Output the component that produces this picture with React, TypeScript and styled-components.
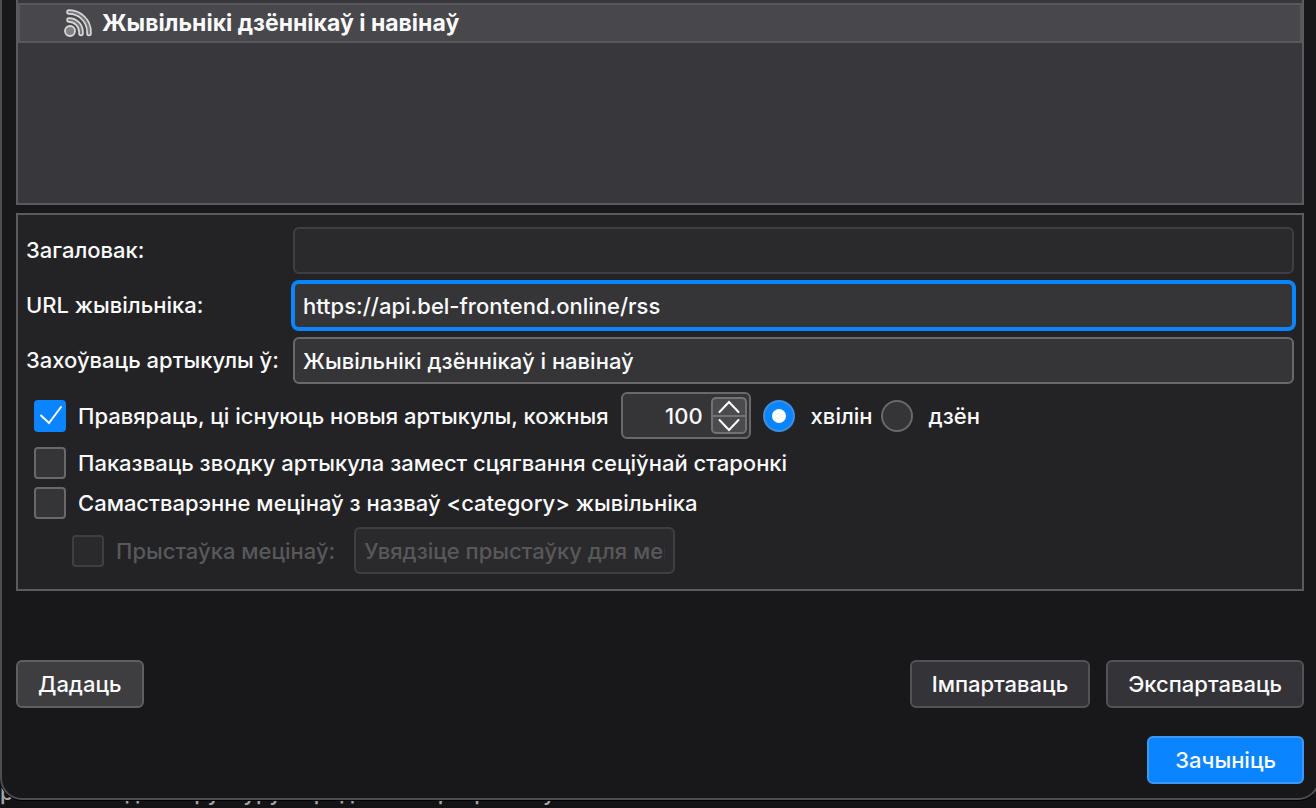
import React, { useState } from "react";
import styled, { createGlobalStyle } from "styled-components";

const GlobalStyle = createGlobalStyle`
  * { box-sizing: border-box; }
  html, body, #root { height: 100%; }
  body {
    margin: 0;
    background: #131315;
    color: #fbfbfe;
    font: 500 22px/28px Inter, "Open Sans", sans-serif;
    overflow: hidden;
  }
  button, input { font: inherit; color: inherit; margin: 0; }
`;

const Page = styled.div`
  display: flex;
  flex-direction: column;
  height: 100vh;
  overflow: hidden;
`;

const Dialog = styled.main`
  position: relative;
  z-index: 1;
  flex: none;
  display: flex;
  flex-direction: column;
  margin-right: -4px;
  padding: 0 14px 14px;
  background: #18181a;
  border: 2px solid #4d4d50;
  border-top: 0;
  border-radius: 0 0 22px 22px;
  box-shadow: 0 1px 0 #000;
`;

const FeedList = styled.ul`
  list-style: none;
  margin: 0 0 8px;
  padding: 3px 0 0;
  min-height: 205px;
  background: #38373b;
  border: 2px solid #5b5b5e;
  border-top: 0;
`;

const FeedItem = styled.li`
  display: flex;
  align-items: center;
  gap: 10px;
  height: 40px;
  padding: 0 44px;
  background: #48474b;
  border: 2px solid #58585b;
  font-size: 23px;
  font-weight: 700;
`;

const Settings = styled.form`
  display: flex;
  flex-direction: column;
  gap: 8px;
  padding: 12px 8px 15px;
  background: #232325;
  border: 2px solid #5b5b5e;
`;

const Field = styled.div`
  display: grid;
  grid-template-columns: 259px 1fr;
  column-gap: 8px;
  align-items: center;
  > label { padding-bottom: 2px; }
`;

const TextInput = styled.input<{ $width?: number }>`
  width: ${(p) => (p.$width ? `${p.$width}px` : "100%")};
  height: 47px;
  padding: 0 8px;
  background: #353537;
  border: 2px solid #69696b;
  border-radius: 6px;
  outline: none;
  &:focus {
    border-color: #0a84ff;
    box-shadow: 0 0 0 2px #0a84ff;
  }
  &:disabled {
    background: #2a2a2c;
    border-color: #3f3f41;
  }
  &::placeholder { color: #58585a; opacity: 1; }
`;

const Options = styled.div`
  display: flex;
  flex-direction: column;
  gap: 8px;
  padding-left: 8px;
`;

const OptionRow = styled.div<{ $indent?: boolean; $gap?: number }>`
  display: flex;
  align-items: center;
  gap: ${(p) => p.$gap ?? 8}px;
  padding-left: ${(p) => (p.$indent ? 38 : 0)}px;
`;

const ChoiceLabel = styled.label<{ $gap?: number; $disabled?: boolean }>`
  display: flex;
  align-items: center;
  gap: ${(p) => p.$gap ?? 12}px;
  color: ${(p) => (p.$disabled ? "#58585a" : "inherit")};
  white-space: nowrap;
`;

const BoxStack = styled.span`
  display: grid;
  flex: none;
  > * { grid-area: 1 / 1; }
  > svg { pointer-events: none; visibility: hidden; }
  > input:checked + svg { visibility: visible; }
`;

const ChoiceInput = styled.input`
  appearance: none;
  width: 32px;
  height: 32px;
  background: #353537;
  border: 2px solid #69696b;
  border-radius: ${(p) => (p.type === "radio" ? "50%" : "4px")};
  &:checked {
    background: #0a84ff;
    border-color: ${(p) => (p.type === "radio" ? "#3f8fe0" : "#0a84ff")};
  }
  &:disabled {
    background: #2a2a2c;
    border-color: #3f3f41;
  }
`;

const Spinner = styled.div`
  display: flex;
  align-items: center;
  width: 130px;
  height: 47px;
  padding: 0 2px;
  margin: 0 4px;
  background: #353537;
  border: 2px solid #69696b;
  border-radius: 6px;
`;

const NumberInput = styled.input`
  flex: 1;
  min-width: 0;
  padding: 0 8px 0 0;
  text-align: right;
  background: none;
  border: 0;
  outline: none;
  appearance: textfield;
  &::-webkit-inner-spin-button { appearance: none; margin: 0; }
`;

const Steps = styled.div`
  display: flex;
  flex-direction: column;
  width: 36px;
`;

const StepButton = styled.button<{ $up?: boolean }>`
  display: grid;
  place-items: center;
  height: ${(p) => (p.$up ? 18 : 19)}px;
  padding: 0;
  background: #4b4b4d;
  border: 2px solid #727274;
  border-bottom-width: ${(p) => (p.$up ? 0 : 2)}px;
  border-radius: ${(p) => (p.$up ? "5px 5px 0 0" : "0 0 5px 5px")};
`;

const Actions = styled.div<{ $top: number }>`
  display: flex;
  gap: 16px;
  margin-top: ${(p) => p.$top}px;
`;

const Spacer = styled.span`
  flex: 1;
`;

const Button = styled.button<{ $kind?: "focus" | "primary" }>`
  height: 48px;
  padding: 0 ${(p) => (p.$kind === "primary" ? 26 : 20)}px;
  background: ${(p) =>
    p.$kind === "primary" ? "#0a84ff" : p.$kind === "focus" ? "#3e3e41" : "#343338"};
  border: 2px solid ${(p) => (p.$kind === "primary" ? "#3b99f5" : p.$kind === "focus" ? "#5f5f61" : "#535357")};
  border-radius: 6px;
`;

const BackgroundText = styled.p`
  margin: -22px 0 0;
  display: flex;
  color: #a5a5a8;
  white-space: pre;
`;

const Word = styled.span<{ $before?: number }>`
  margin-left: ${(p) => p.$before ?? 0}px;
`;

const FeedIcon = () => (
  <svg width="28" height="28" viewBox="0 0 28 28" fill="none" strokeLinecap="round" aria-hidden="true">
    <g stroke="#d8d8da" strokeWidth="5.5">
      <path d="M5 3A20 20 0 0 1 25 23V24.500" />
      <path d="M5 11A12 12 0 0 1 17 23V24.500" />
    </g>
    <g stroke="#77777a" strokeWidth="2.2">
      <path d="M5 3A20 20 0 0 1 25 23V24.500" />
      <path d="M5 11A12 12 0 0 1 17 23V24.500" />
    </g>
    <circle cx="6" cy="22" r="5" fill="#828285" stroke="#d8d8da" strokeWidth="1.800" />
  </svg>
);

const CheckMark = () => (
  <svg width="32" height="32" viewBox="0 0 32 32" fill="none" stroke="#fff" strokeWidth="2" strokeLinecap="round" aria-hidden="true">
    <path d="M7 15.500l8 7.500L27 7" />
  </svg>
);

const RadioDot = () => (
  <svg width="32" height="32" viewBox="0 0 32 32" aria-hidden="true">
    <circle cx="16" cy="16" r="7" fill="#fff" />
  </svg>
);

const Chevron = ({ up }: { up?: boolean }) => (
  <svg width="22" height="14" viewBox="0 0 22 14" fill="none" stroke="#fff" strokeWidth="2" strokeLinecap="round" aria-hidden="true">
    <path d={up ? "M1.500 12L11 2l9.500 10" : "M1.500 2L11 12l9.500-10"} />
  </svg>
);

export default function App() {
  const [interval, setIntervalValue] = useState(100);
  const [unit, setUnit] = useState("minutes");

  return (
    <>
      <GlobalStyle />
      <Page>
        <Dialog>
          <FeedList>
            <FeedItem>
              <FeedIcon />
              Жывільнікі дзённікаў і навінаў
            </FeedItem>
          </FeedList>

          <Settings onSubmit={(e) => e.preventDefault()}>
            <Field>
              <label htmlFor="title">Загаловак:</label>
              <TextInput id="title" disabled />
            </Field>
            <Field>
              <label htmlFor="url">URL жывільніка:</label>
              <TextInput id="url" autoFocus defaultValue="https://api.bel-frontend.online/rss" />
            </Field>
            <Field>
              <label htmlFor="folder">Захоўваць артыкулы ў:</label>
              <TextInput id="folder" defaultValue="Жывільнікі дзённікаў і навінаў" />
            </Field>

            <Options>
              <OptionRow>
                <ChoiceLabel>
                  <BoxStack>
                    <ChoiceInput type="checkbox" defaultChecked />
                    <CheckMark />
                  </BoxStack>
                  Правяраць, ці існуюць новыя артыкулы, кожныя
                </ChoiceLabel>
                <Spinner>
                  <NumberInput
                    type="number"
                    aria-label="Інтэрвал"
                    value={interval}
                    onChange={(e) => setIntervalValue(Number(e.target.value))}
                  />
                  <Steps>
                    <StepButton type="button" $up aria-label="+" onClick={() => setIntervalValue(interval + 1)}>
                      <Chevron up />
                    </StepButton>
                    <StepButton type="button" aria-label="-" onClick={() => setIntervalValue(interval - 1)}>
                      <Chevron />
                    </StepButton>
                  </Steps>
                </Spinner>
                <ChoiceLabel $gap={16}>
                  <BoxStack>
                    <ChoiceInput type="radio" name="unit" checked={unit === "minutes"} onChange={() => setUnit("minutes")} />
                    <RadioDot />
                  </BoxStack>
                  хвілін
                </ChoiceLabel>
                <ChoiceLabel $gap={16}>
                  <BoxStack>
                    <ChoiceInput type="radio" name="unit" checked={unit === "days"} onChange={() => setUnit("days")} />
                    <RadioDot />
                  </BoxStack>
                  дзён
                </ChoiceLabel>
              </OptionRow>
              <OptionRow>
                <ChoiceLabel>
                  <BoxStack>
                    <ChoiceInput type="checkbox" />
                    <CheckMark />
                  </BoxStack>
                  Паказваць зводку артыкула замест сцягвання сеціўнай старонкі
                </ChoiceLabel>
              </OptionRow>
              <OptionRow>
                <ChoiceLabel>
                  <BoxStack>
                    <ChoiceInput type="checkbox" />
                    <CheckMark />
                  </BoxStack>
                  {"Самастварэнне мецінаў з назваў <category> жывільніка"}
                </ChoiceLabel>
              </OptionRow>
              <OptionRow $indent $gap={19}>
                <ChoiceLabel $disabled>
                  <BoxStack>
                    <ChoiceInput type="checkbox" disabled />
                    <CheckMark />
                  </BoxStack>
                  Прыстаўка мецінаў:
                </ChoiceLabel>
                <TextInput $width={321} disabled aria-label="Прыстаўка мецінаў" placeholder="Увядзіце прыстаўку для мецінаў" />
              </OptionRow>
            </Options>
          </Settings>

          <Actions $top={69}>
            <Button type="button" $kind="focus">Дадаць</Button>
            <Spacer />
            <Button type="button">Імпартаваць</Button>
            <Button type="button">Экспартаваць</Button>
          </Actions>
          <Actions $top={28}>
            <Spacer />
            <Button type="button" $kind="primary">Зачыніць</Button>
          </Actions>
        </Dialog>

        <BackgroundText aria-hidden="true">
          <Word>р</Word>
          <Word $before={112}>для структуру</Word>
          <Word $before={32}>рада</Word>
          <Word $before={58}>праграмнаў</Word>
        </BackgroundText>
      </Page>
    </>
  );
}
